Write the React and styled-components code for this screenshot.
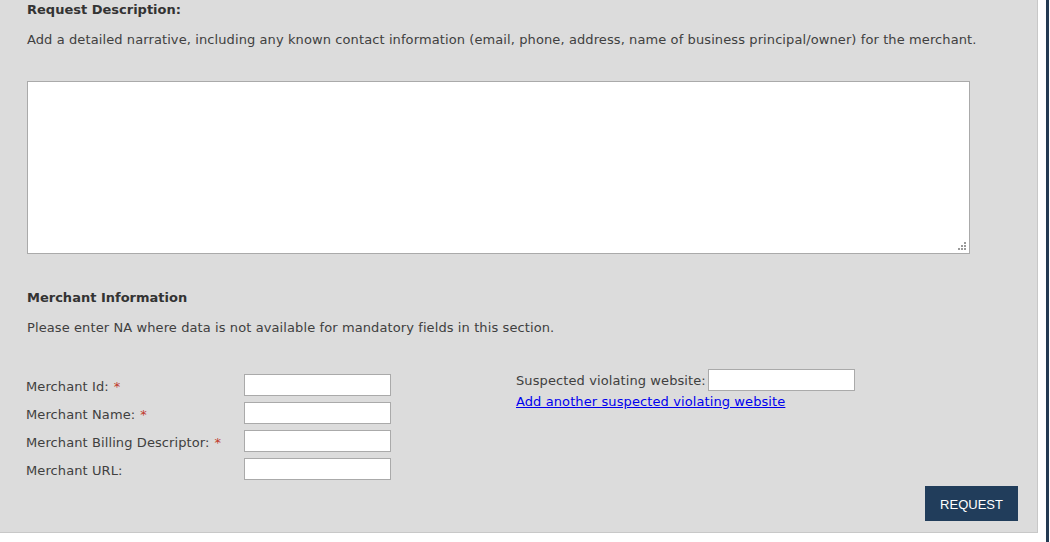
import React from "react";
import styled, { createGlobalStyle } from "styled-components";

const Global = createGlobalStyle`
  html, body { margin: 0; padding: 0; background: #ffffff; }
  body { font-family: "DejaVu Sans", Verdana, sans-serif; }
`;

const Page = styled.div`
  display: flex;
  width: 1050px;
  height: 542px;
  overflow: hidden;
`;

const Panel = styled.div`
  width: 1038px;
  height: 533px;
  background: #dcdcdc;
  border-right: 1px solid #c8c8c8;
  border-bottom: 1px solid #c8c8c8;
  padding: 0 19px 0 27px;
  box-sizing: border-box;
  display: flex;
  flex-direction: column;
  color: #404040;
  font-size: 13px;
  letter-spacing: 0.1px;
`;

const Gap = styled.div`
  width: 8px;
`;

const EdgeBar = styled.div`
  width: 3px;
  background: #233a52;
`;

const Heading = styled.div`
  font-weight: bold;
  line-height: 20px;
  color: #333333;
  letter-spacing: 0;
  margin-top: ${(p) => p.$top}px;
`;

const Para = styled.div`
  line-height: 20px;
  margin-top: 10px;
  white-space: nowrap;
`;

const AreaWrap = styled.div`
  position: relative;
  width: 943px;
  height: 173px;
  margin-top: 31px;
`;

const Area = styled.textarea`
  display: block;
  box-sizing: border-box;
  width: 100%;
  height: 100%;
  margin: 0;
  background: #ffffff;
  border: 1px solid #aaaaaa;
  padding: 2px;
  font: inherit;
  resize: none;
`;

const Grip = styled.svg`
  position: absolute;
  right: 3px;
  bottom: 3px;
  width: 9px;
  height: 9px;
  pointer-events: none;
`;

const FormRow = styled.div`
  display: flex;
  margin-top: 31px;
`;

const LeftCol = styled.div`
  display: flex;
  flex-direction: column;
  gap: 6px;
  margin-top: 5px;
  width: 490px;
  margin-left: -1px;
`;

const Field = styled.div`
  display: grid;
  grid-template-columns: 218px 147px;
  grid-template-rows: 22px;
  align-items: end;
  height: 22px;
`;

const Label = styled.label`
  line-height: 20px;
  margin-bottom: -1px;
`;

const Req = styled.span`
  color: #c0392b;
  margin-left: 5px;
`;

const Input = styled.input`
  box-sizing: border-box;
  width: 147px;
  height: 22px;
  margin: 0;
  padding: 1px 3px;
  background: #ffffff;
  border: 1px solid #aaaaaa;
  font: inherit;
`;

const RightCol = styled.div`
  display: flex;
  flex-direction: column;
`;

const Inline = styled.div`
  display: flex;
  align-items: center;
  height: 22px;
`;

const InlineText = styled.span`
  padding-top: 1px;
  margin-right: 2px;
`;

const Link = styled.a`
  color: #0000ee;
  text-decoration: underline;
  line-height: 20px;
  margin-top: 1px;
  cursor: pointer;
`;

const Footer = styled.div`
  display: flex;
  justify-content: flex-end;
  margin-top: 6px;
`;

const Button = styled.button`
  width: 93px;
  height: 35px;
  background: #213d5b;
  color: #ffffff;
  border: none;
  font-family: "Liberation Sans", Arial, sans-serif;
  font-size: 13px;
  letter-spacing: 0;
  padding: 2px 0 0 0;
  margin: 0;
  cursor: pointer;
`;

const fields = [
  { label: "Merchant Id:", required: true },
  { label: "Merchant Name:", required: true },
  { label: "Merchant Billing Descriptor:", required: true },
  { label: "Merchant URL:", required: false },
];

export default function App() {
  return (
    <>
      <Global />
      <Page>
        <Panel>
          <Heading $top={0}>Request Description:</Heading>
          <Para>
            Add a detailed narrative, including any known contact information (email, phone, address, name of business principal/owner) for the merchant.
          </Para>
          <AreaWrap>
            <Area />
            <Grip viewBox="0 0 9 9">
              <g fill="#9a9a9a">
                <rect x="6" y="0" width="2" height="2" />
                <rect x="3" y="3" width="2" height="2" />
                <rect x="6" y="3" width="2" height="2" />
                <rect x="0" y="6" width="2" height="2" />
                <rect x="3" y="6" width="2" height="2" />
                <rect x="6" y="6" width="2" height="2" />
              </g>
            </Grip>
          </AreaWrap>
          <Heading $top={34}>Merchant Information</Heading>
          <Para>Please enter NA where data is not available for mandatory fields in this section.</Para>
          <FormRow>
            <LeftCol>
              {fields.map((f) => (
                <Field key={f.label}>
                  <Label>
                    {f.label}
                    {f.required && <Req>*</Req>}
                  </Label>
                  <Input type="text" />
                </Field>
              ))}
            </LeftCol>
            <RightCol>
              <Inline>
                <InlineText>Suspected violating website:</InlineText>
                <Input type="text" />
              </Inline>
              <Link>Add another suspected violating website</Link>
            </RightCol>
          </FormRow>
          <Footer>
            <Button>REQUEST</Button>
          </Footer>
        </Panel>
        <Gap />
        <EdgeBar />
      </Page>
    </>
  );
}
